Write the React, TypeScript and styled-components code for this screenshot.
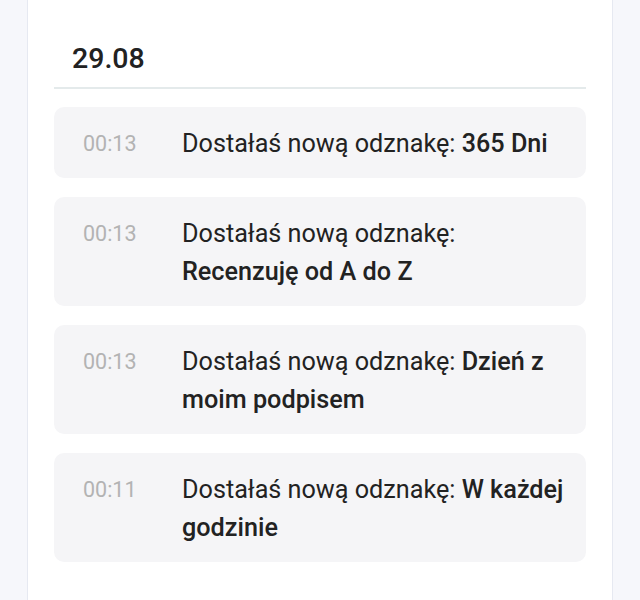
import React from "react";
import styled, { createGlobalStyle } from "styled-components";

const GlobalStyle = createGlobalStyle`
  html, body {
    margin: 0;
    padding: 0;
    background: #f6f7fb;
    font-family: Roboto, "Noto Sans", sans-serif;
    -webkit-font-smoothing: antialiased;
  }
`;

interface Notification {
  time: string;
  label: string;
  badge: string;
}

const notifications: Notification[] = [
  { time: "00:13", label: "Dostałaś nową odznakę:", badge: "365 Dni" },
  { time: "00:13", label: "Dostałaś nową odznakę:", badge: "Recenzuję od A do Z" },
  { time: "00:13", label: "Dostałaś nową odznakę:", badge: "Dzień z moim podpisem" },
  { time: "00:11", label: "Dostałaś nową odznakę:", badge: "W każdej godzinie" },
];

function App() {
  return (
    <>
      <GlobalStyle />
      <Page>
        <Card>
          <DayHeader>29.08</DayHeader>
          <List>
            {notifications.map((item, i) => (
              <Item key={i}>
                <Time>{item.time}</Time>
                <Message>
                  {item.label} <strong>{item.badge}</strong>
                </Message>
              </Item>
            ))}
          </List>
        </Card>
      </Page>
    </>
  );
}

const Page = styled.div`
  width: 640px;
  height: 600px;
  overflow: hidden;
  padding: 0 27px 0 27px;
  box-sizing: border-box;
`;

const Card = styled.div`
  background: #fff;
  border-left: 1.5px solid #e6e9f1;
  border-right: 1.5px solid #e6e9f1;
  height: 100%;
  box-sizing: border-box;
  padding: 0 26px;
`;

const DayHeader = styled.h3`
  margin: 0;
  padding: 42px 18px 11px;
  font-family: "Roboto Medium", Roboto, sans-serif;
  font-size: 28.5px;
  font-weight: 500;
  line-height: 34px;
  color: #222;
  border-bottom: 2px solid #e4eaeb;
`;

const List = styled.div`
  display: flex;
  flex-direction: column;
  gap: 19px;
  padding-top: 18px;
`;

const Item = styled.div`
  display: flex;
  align-items: flex-start;
  background: #f5f5f7;
  border-radius: 10px;
  padding: 18px 20px 15px 29px;
`;

const Time = styled.span`
  flex: 0 0 99px;
  font-size: 21.5px;
  line-height: 38px;
  color: #b3b3b3;
`;

const Message = styled.p`
  margin: 0;
  font-size: 25.2px;
  line-height: 38px;
  color: #222;

  strong {
    font-family: "Roboto Medium", Roboto, sans-serif;
    font-weight: 500;
  }
`;

export default App;
